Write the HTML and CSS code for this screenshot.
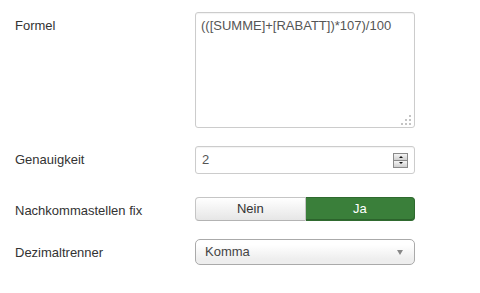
FILE: index.html
```html
<!DOCTYPE html>
<html lang="de">
<head>
    <meta charset="UTF-8">
    <title>Formel-Feld</title>
    <link rel="stylesheet" href="styles.css">
</head>
<body>
    <form class="form-horizontal">
        <div class="control-group">
            <label class="control-label" for="formel">Formel</label>
            <div class="controls">
                <div class="textarea-wrap">
                    <textarea id="formel" class="input-formel">(([SUMME]+[RABATT])*107)/100</textarea>
                    <svg class="grip" width="10" height="10" viewBox="0 0 10 10">
                        <rect x="8" y="0" width="2" height="2"/>
                        <rect x="4" y="4" width="2" height="2"/>
                        <rect x="8" y="4" width="2" height="2"/>
                        <rect x="0" y="8" width="2" height="2"/>
                        <rect x="4" y="8" width="2" height="2"/>
                        <rect x="8" y="8" width="2" height="2"/>
                    </svg>
                </div>
            </div>
        </div>

        <div class="control-group group-number">
            <label class="control-label" for="genauigkeit">Genauigkeit</label>
            <div class="controls">
                <div class="number-input">
                    <span class="number-value">2</span>
                    <span class="spinner">
                        <span class="spin spin-up"></span>
                        <span class="spin spin-down"></span>
                    </span>
                </div>
            </div>
        </div>

        <div class="control-group">
            <label class="control-label">Nachkommastellen fix</label>
            <div class="controls">
                <div class="btn-group">
                    <button type="button" class="btn">Nein</button>
                    <button type="button" class="btn btn-success">Ja</button>
                </div>
            </div>
        </div>

        <div class="control-group">
            <label class="control-label" for="trenner">Dezimaltrenner</label>
            <div class="controls">
                <div class="select-box" id="trenner">
                    <span>Komma</span>
                    <span class="arrow"></span>
                </div>
            </div>
        </div>
    </form>
</body>
</html>
```

FILE: styles.css
```css
body {
    margin: 0;
    padding: 12px 0 0 15px;
    background: #fff;
    font-family: "Liberation Sans", Arial, sans-serif;
    font-size: 13px;
    line-height: 18px;
    color: #333;
}

.control-group {
    display: flex;
    margin-bottom: 18px;
}

.group-number {
    margin-bottom: 23px;
}

.control-label {
    width: 180px;
    padding-top: 5px;
    color: #333;
}

.controls {
    width: 220px;
}

.textarea-wrap {
    position: relative;
}

.input-formel {
    display: block;
    width: 220px;
    height: 116px;
    box-sizing: border-box;
    margin: 0;
    padding: 4px 5px;
    border: 1px solid #ccc;
    border-radius: 3px;
    font-family: "Liberation Sans", Arial, sans-serif;
    font-size: 13px;
    line-height: 18px;
    color: #555;
    resize: none;
    outline: none;
    box-shadow: inset 0 1px 1px rgba(0,0,0,0.05);
}

.grip {
    position: absolute;
    right: 4px;
    bottom: 3px;
    fill: #c4c4c4;
}

.number-input {
    display: flex;
    align-items: center;
    justify-content: space-between;
    height: 28px;
    box-sizing: border-box;
    padding: 0 6px 0 6px;
    border: 1px solid #ccc;
    border-radius: 3px;
    color: #555;
    box-shadow: inset 0 1px 1px rgba(0,0,0,0.05);
}

.spinner {
    display: flex;
    flex-direction: column;
    width: 15px;
    height: 15px;
    margin-top: 1px;
}

.spin {
    flex: 1;
    position: relative;
    border: 1px solid #8a8a8a;
    background: linear-gradient(#f4f4f4, #cfcfcf);
}

.spin-down {
    border-top: none;
}

.spin::after {
    content: "";
    position: absolute;
    left: 5px;
    top: 2px;
    border-left: 2px solid transparent;
    border-right: 2px solid transparent;
}

.spin-up::after {
    border-bottom: 2px solid #111;
}

.spin-down::after {
    top: 1px;
    border-top: 2px solid #111;
}

.btn-group {
    display: flex;
    height: 24px;
}

.btn {
    flex: 1;
    margin: 0;
    padding: 0;
    font-family: "Liberation Sans", Arial, sans-serif;
    font-size: 13px;
    line-height: 18px;
    color: #333;
    border: 1px solid #c5c5c5;
    border-bottom-color: #b3b3b3;
    background: linear-gradient(#ffffff, #e6e6e6);
    border-radius: 4px 0 0 4px;
}

.btn-success {
    color: #fff;
    border-color: #2f6a2f;
    border-left: none;
    background: #3a7f3a;
    border-radius: 0 4px 4px 0;
    box-shadow: inset 0 -1px 0 #2c632c;
}

.select-box {
    position: relative;
    display: flex;
    align-items: center;
    height: 26px;
    box-sizing: border-box;
    padding: 0 9px;
    border: 1px solid #aaa;
    border-radius: 5px;
    background: linear-gradient(#ffffff 20%, #eeeeee 80%);
    color: #444;
}

.arrow {
    position: absolute;
    right: 11px;
    top: 10px;
    border-left: 3px solid transparent;
    border-right: 3px solid transparent;
    border-top: 5px solid #888;
}
```
